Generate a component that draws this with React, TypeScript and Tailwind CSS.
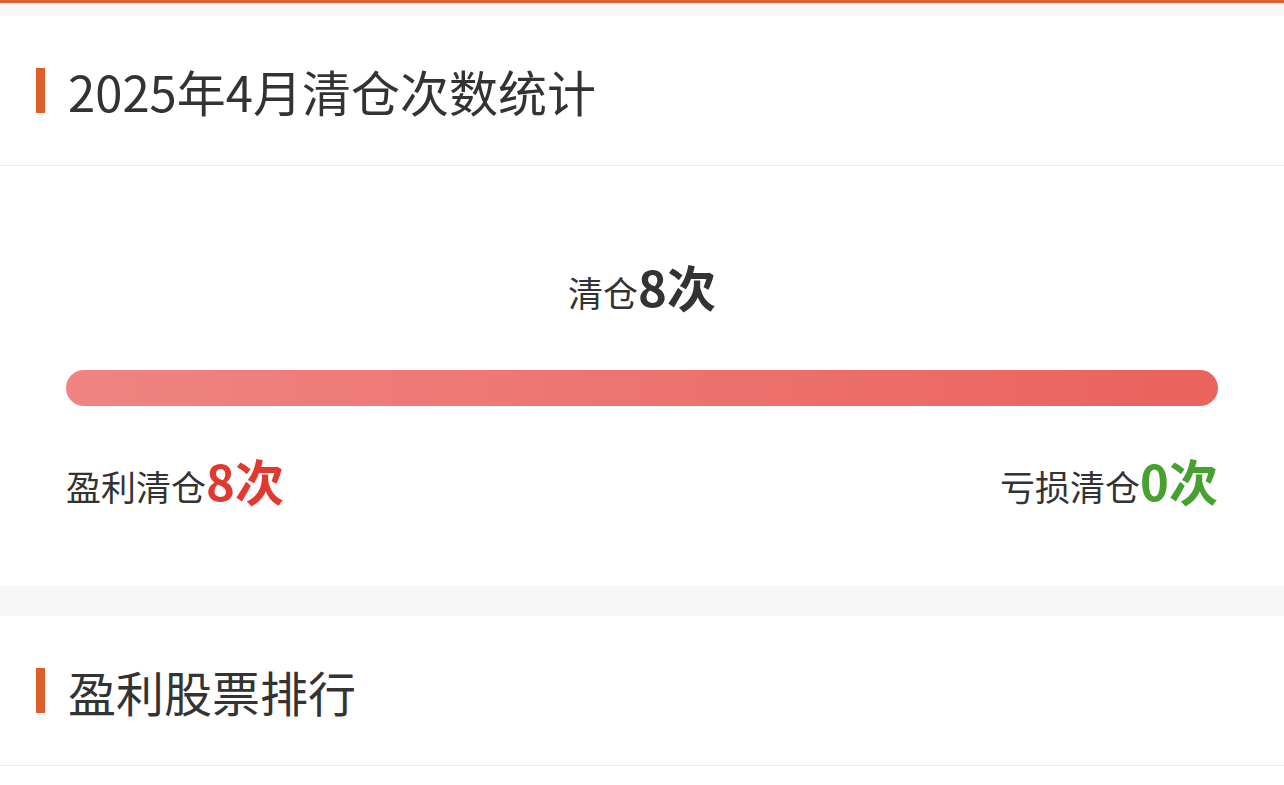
export default function App() {
  return (
    <div
      className="min-h-[785px] bg-[#f7f7f7] text-[#333]"
      style={{ fontFamily: '"Noto Sans CJK SC", "Noto Sans", sans-serif' }}
    >
      <div className="h-[3px] bg-[#e0602f]" />
      <div className="h-[13px]" />

      {/* 清仓统计 */}
      <div className="bg-white">
        <div className="h-[150px] flex items-center border-b border-[#eeeeee]">
          <div className="ml-[36px] w-[9px] h-[45px] bg-[#dc5f2b]" />
          <h2 className="ml-[23px] text-[49px] leading-none">2025年4月清仓次数统计</h2>
        </div>
        <div className="px-[66px] pt-[92px] pb-[72px]">
          <div className="flex items-baseline justify-center leading-[56px]">
            <span className="text-[35px]">清仓</span>
            <span className="text-[49px] font-semibold">8次</span>
          </div>
          <div className="mt-[50px] h-[36px] rounded-full bg-gradient-to-r from-[#ef8482] to-[#ea625c]" />
          <div className="mt-[46px] flex items-baseline justify-between leading-[56px]">
            <div className="flex items-baseline">
              <span className="text-[35px]">盈利清仓</span>
              <span className="text-[49px] font-semibold text-[#e0392f]">8次</span>
            </div>
            <div className="flex items-baseline">
              <span className="text-[35px]">亏损清仓</span>
              <span className="text-[49px] font-semibold text-[#47a130]">0次</span>
            </div>
          </div>
        </div>
      </div>

      <div className="h-[30px]" />

      {/* 盈利股票排行 */}
      <div className="bg-white min-h-[169px]">
        <div className="h-[150px] flex items-center border-b border-[#eeeeee]">
          <div className="ml-[36px] w-[9px] h-[45px] bg-[#dc5f2b]" />
          <h2 className="ml-[23px] text-[48px] leading-none">盈利股票排行</h2>
        </div>
      </div>
    </div>
  );
}
